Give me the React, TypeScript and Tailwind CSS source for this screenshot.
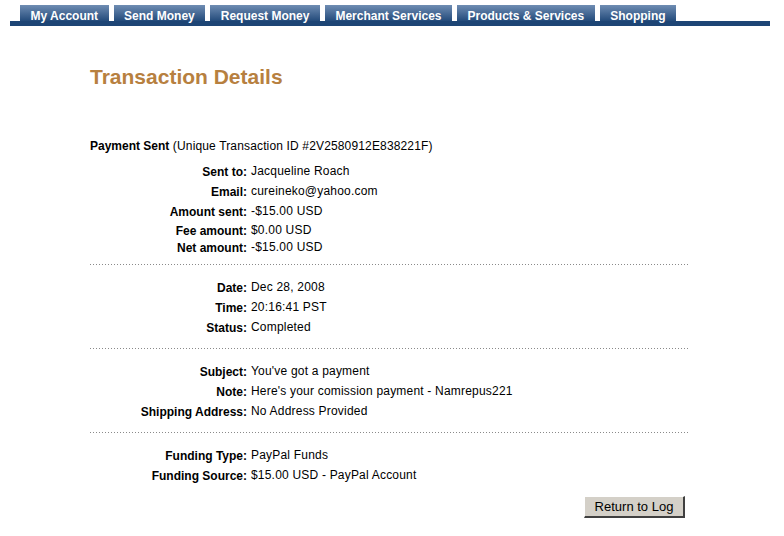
import React from "react";

const tabs = [
  "My Account",
  "Send Money",
  "Request Money",
  "Merchant Services",
  "Products & Services",
  "Shopping",
];

type Row = { label: string; value: string; h?: string };

function Rows({ rows }: { rows: Row[] }) {
  return (
    <div className="flex flex-col">
      {rows.map((r) => (
        <div key={r.label} className={`flex items-center ${r.h ?? "h-[20px]"}`}>
          <div className="w-[157px] text-right font-bold text-[12px] leading-[14px] text-black">
            {r.label}
          </div>
          <div className="pl-[4px] text-[12px] leading-[14px] tracking-[0.2px] text-black -mt-[2px]">
            {r.value}
          </div>
        </div>
      ))}
    </div>
  );
}

function Dots() {
  return (
    <div className="h-px w-[600px] bg-[repeating-linear-gradient(to_right,#8a8a8a_0_1px,transparent_1px_3px)]" />
  );
}

export default function App() {
  return (
    <div
      className="w-[784px] h-[536px] bg-white overflow-hidden"
      style={{ fontFamily: '"Liberation Sans", Arial, sans-serif' }}
    >
      <div className="pt-[5px]">
        <div className="ml-[10px] w-[760px] border-b-[5px] border-[#1d4575] flex gap-[5px] pl-[10px]">
          {tabs.map((t) => (
            <div
              key={t}
              className="h-[16px] px-[10.5px] pt-[4px] bg-linear-to-b from-[#6f8db3] to-[#234b7b] text-white font-bold text-[12px] leading-[14px] whitespace-nowrap"
            >
              {t}
            </div>
          ))}
        </div>
      </div>

      <div className="pl-[90px] w-[690px]">
        <h1 className="mt-[39px] text-[21px] leading-[24px] font-bold text-[#b7803f]">
          Transaction Details
        </h1>

        <div className="mt-[49px] text-[12px] leading-[16px] tracking-[0.15px] text-black">
          <span className="font-bold tracking-normal">Payment Sent</span> (Unique Transaction ID #2V2580912E838221F)
        </div>

        <div className="mt-[8px]">
          <Rows
            rows={[
              { label: "Sent to:", value: "Jacqueline Roach" },
              { label: "Email:", value: "cureineko@yahoo.com" },
              { label: "Amount sent:", value: "-$15.00 USD" },
              { label: "Fee amount:", value: "$0.00 USD", h: "h-[18px]" },
              { label: "Net amount:", value: "-$15.00 USD", h: "h-[16px]" },
            ]}
          />
        </div>

        <div className="mt-[8px]">
          <Dots />
        </div>

        <div className="mt-[13px]">
          <Rows
            rows={[
              { label: "Date:", value: "Dec 28, 2008" },
              { label: "Time:", value: "20:16:41 PST" },
              { label: "Status:", value: "Completed" },
            ]}
          />
        </div>

        <div className="mt-[10px]">
          <Dots />
        </div>

        <div className="mt-[13px]">
          <Rows
            rows={[
              { label: "Subject:", value: "You've got a payment" },
              { label: "Note:", value: "Here's your comission payment - Namrepus221" },
              { label: "Shipping Address:", value: "No Address Provided" },
            ]}
          />
        </div>

        <div className="mt-[10px]">
          <Dots />
        </div>

        <div className="mt-[13px]">
          <Rows
            rows={[
              { label: "Funding Type:", value: "PayPal Funds" },
              { label: "Funding Source:", value: "$15.00 USD - PayPal Account" },
            ]}
          />
        </div>

        <div className="mt-[10px] w-[600px] flex justify-end pr-[5px]">
          <button className="w-[101px] h-[22px] bg-[#d4d0c8] border-t border-l border-t-white border-l-white border-r-2 border-b-2 border-r-[#404040] border-b-[#404040] text-[13px] leading-[15px] text-black">
            Return to Log
          </button>
        </div>
      </div>
    </div>
  );
}
